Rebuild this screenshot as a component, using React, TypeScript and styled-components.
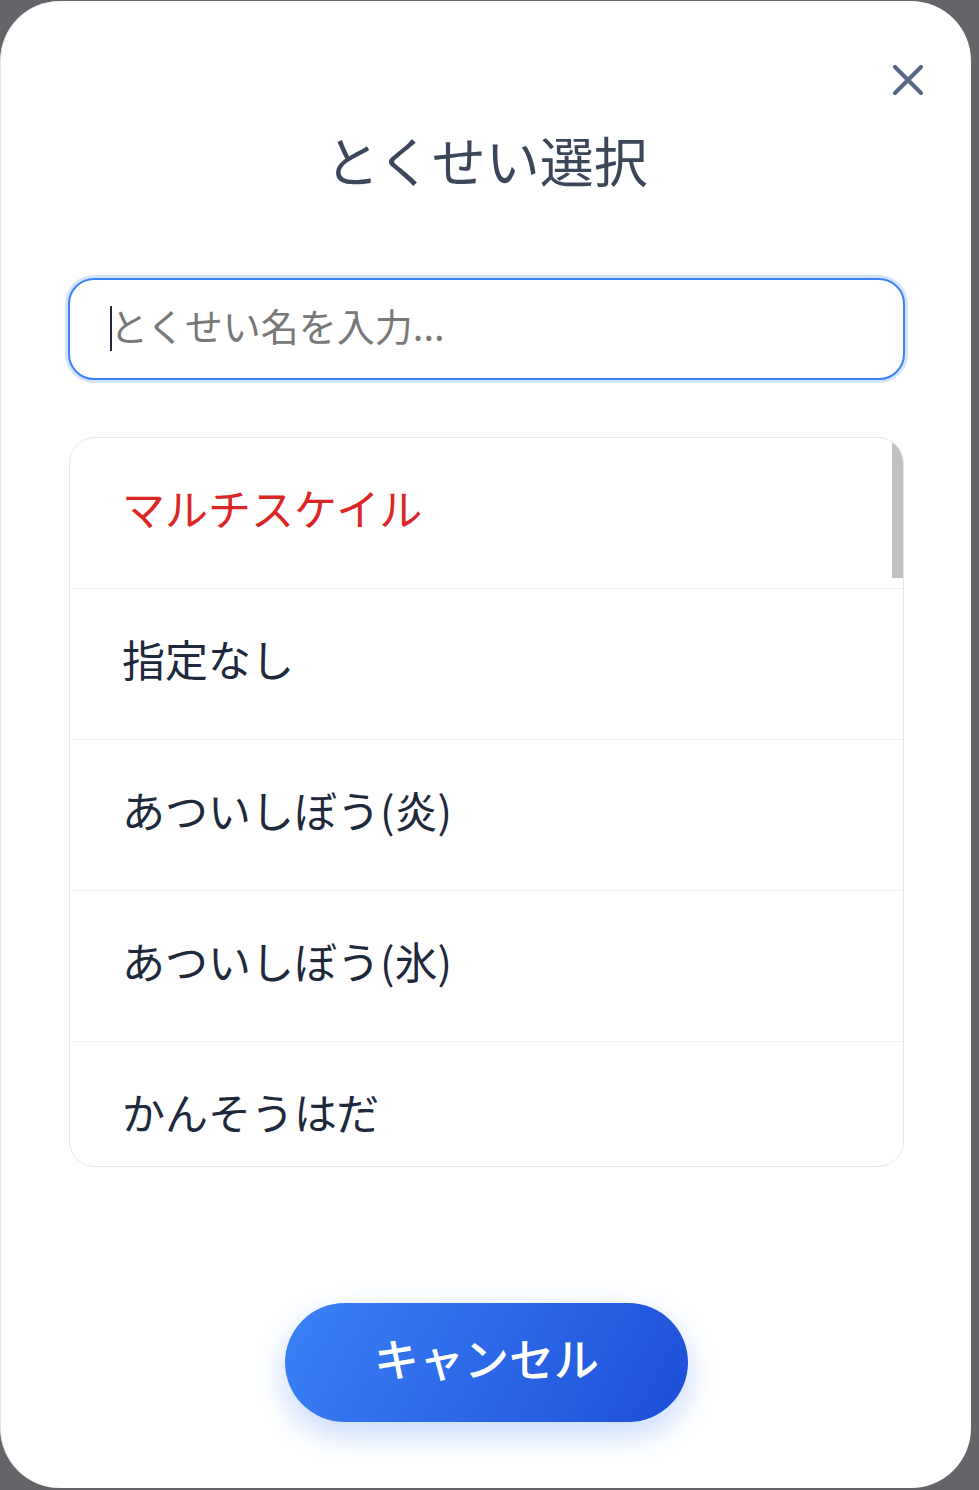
import React from 'react';
import styled, { createGlobalStyle } from 'styled-components';

const GlobalStyle = createGlobalStyle`
  html, body {
    margin: 0;
    padding: 0;
    background: #646569;
  }
  * {
    box-sizing: border-box;
  }
`;

const Page = styled.div`
  width: 979px;
  height: 1490px;
  padding: 1px 8px 2px 0;
  font-family: "Noto Sans CJK JP", "Noto Sans", sans-serif;
`;

const Modal = styled.div`
  position: relative;
  height: 100%;
  background: #ffffff;
  border-radius: 60px;
  border-left: 1px solid #e4e4e6;
  padding: 127px 66px 0 67px;
  display: flex;
  flex-direction: column;
  align-items: stretch;
`;

const CloseButton = styled.button`
  position: absolute;
  top: 63px;
  right: 47px;
  width: 32px;
  height: 32px;
  padding: 0;
  border: none;
  background: none;
  cursor: pointer;
  display: flex;
  align-items: center;
  justify-content: center;
`;

const Title = styled.h2`
  margin: 0;
  height: 64px;
  line-height: 64px;
  text-align: center;
  font-size: 54px;
  font-weight: 400;
  color: #3b4759;
`;

const InputWrap = styled.div`
  position: relative;
  margin-top: 86px;
`;

const SearchInput = styled.input`
  display: block;
  height: 102px;
  width: 100%;
  border: 2px solid #3b82f6;
  border-radius: 26px;
  box-shadow: 0 0 0 3px rgba(59, 130, 246, 0.22);
  padding: 0 40px 10px 40px;
  font-family: inherit;
  font-size: 38px;
  color: #1f2937;
  caret-color: transparent;
  outline: none;
  background: #fff;

  &::placeholder {
    color: #787878;
  }
`;

const Caret = styled.span`
  position: absolute;
  left: 42px;
  top: 28px;
  width: 2px;
  height: 45px;
  background: #1f2937;
  pointer-events: none;
`;

const ListFrame = styled.div`
  position: relative;
  margin: 57px 1px 0 1px;
  height: 730px;
  border: 1px solid #e5e7eb;
  border-radius: 26px;
  overflow: hidden;
`;

const List = styled.ul`
  margin: 0;
  padding: 0;
  list-style: none;
  height: 100%;
  overflow-y: auto;
  scrollbar-width: none;

  &::-webkit-scrollbar {
    display: none;
  }
`;

const ScrollThumb = styled.div`
  position: absolute;
  top: 0;
  right: 0;
  width: 11px;
  background: #c1c1c1;
  pointer-events: none;
`;

const Row = styled.li<{ $selected?: boolean }>`
  height: 151px;
  display: flex;
  align-items: center;
  padding: 0 0 12px 52px;
  border-bottom: 1px solid #eef1f5;
  font-size: 43px;
  color: ${(p) => (p.$selected ? '#dc2626' : '#1e293b')};
  cursor: pointer;
`;

const Footer = styled.div`
  margin-top: 136px;
  display: flex;
  justify-content: center;
`;

const CancelButton = styled.button`
  width: 403px;
  height: 119px;
  padding: 0 0 10px;
  border: none;
  border-radius: 60px;
  background: linear-gradient(120deg, #3b82f6 0%, #1d4ed8 100%);
  box-shadow: 0 12px 32px rgba(59, 130, 246, 0.3);
  color: #ffffff;
  font-family: inherit;
  font-size: 45px;
  font-weight: 500;
  cursor: pointer;
`;

const abilities = [
  'マルチスケイル',
  '指定なし',
  'あついしぼう(炎)',
  'あついしぼう(氷)',
  'かんそうはだ',
  'たいねつ',
  'ちょすい',
  'ちくでん',
  'もらいび',
  'ふゆう',
  'よびみず',
  'ひらいしん',
  'でんきエンジン',
  'そうしょく',
  'どしょく',
  'かぜのり',
  'ハードロック',
  'フィルター',
  'プリズムアーマー',
  'ファントムガード',
  'こおりのりんぷん',
  'もふもふ',
  'すいほう',
  'きよめのしお',
  'ふしぎなまもり',
];

const LIST_HEIGHT = 728;
const ROW_HEIGHT = 151;

const App: React.FC = () => {
  const [scrollTop, setScrollTop] = React.useState(0);
  const contentHeight = abilities.length * ROW_HEIGHT;
  const thumbHeight = Math.round((LIST_HEIGHT / contentHeight) * LIST_HEIGHT);
  const thumbTop = Math.round((scrollTop / contentHeight) * LIST_HEIGHT);

  return (
    <Page>
      <GlobalStyle />
      <Modal>
        <CloseButton aria-label="閉じる">
          <svg width="32" height="32" viewBox="0 0 32 32">
            <path
              d="M3 3 L29 29 M29 3 L3 29"
              stroke="#586a84"
              strokeWidth="4.2"
              strokeLinecap="round"
            />
          </svg>
        </CloseButton>
        <Title>とくせい選択</Title>
        <InputWrap>
          <SearchInput placeholder="とくせい名を入力..." />
          <Caret />
        </InputWrap>
        <ListFrame>
          <List onScroll={(e) => setScrollTop(e.currentTarget.scrollTop)}>
            {abilities.map((name, index) => (
              <Row key={name} $selected={index === 0}>
                {name}
              </Row>
            ))}
          </List>
          <ScrollThumb style={{ top: thumbTop, height: thumbHeight }} />
        </ListFrame>
        <Footer>
          <CancelButton>キャンセル</CancelButton>
        </Footer>
      </Modal>
    </Page>
  );
};

export default App;
